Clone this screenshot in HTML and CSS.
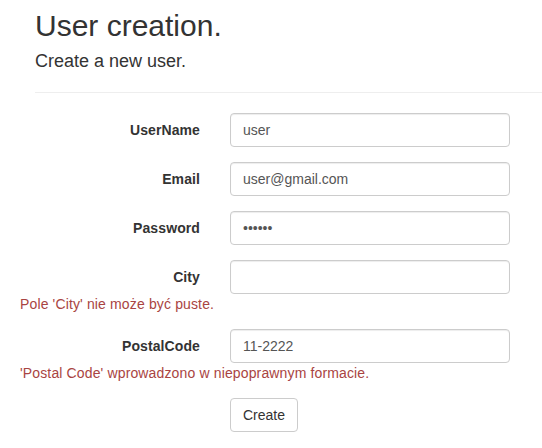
FILE: index.html
```html
<!DOCTYPE html>
<html>
<head>
<meta charset="utf-8">
<link rel="stylesheet" href="styles.css">
</head>
<body>
<div class="page">
  <h2 class="title">User creation.</h2>
  <h4 class="subtitle">Create a new user.</h4>
  <hr class="rule">
  <form class="form">
    <div class="form-group">
      <label class="control-label">UserName</label>
      <div class="field"><input class="form-control" type="text" value="user"></div>
    </div>
    <div class="form-group">
      <label class="control-label">Email</label>
      <div class="field"><input class="form-control" type="text" value="user@gmail.com"></div>
    </div>
    <div class="form-group">
      <label class="control-label">Password</label>
      <div class="field"><input class="form-control" type="password" value="123456"></div>
    </div>
    <div class="form-group">
      <label class="control-label">City</label>
      <div class="field"><input class="form-control" type="text" value=""></div>
      <span class="text-danger">Pole 'City' nie może być puste.</span>
    </div>
    <div class="form-group">
      <label class="control-label">PostalCode</label>
      <div class="field"><input class="form-control" type="text" value="11-2222"></div>
      <span class="text-danger">'Postal Code' wprowadzono w niepoprawnym formacie.</span>
    </div>
    <div class="form-group">
      <div class="spacer"></div>
      <div class="field"><button type="button" class="btn">Create</button></div>
    </div>
  </form>
</div>
</body>
</html>
```

FILE: styles.css
```css
* { box-sizing: border-box; }
html, body { margin: 0; padding: 0; background: #fff; }
body {
  font-family: "Liberation Sans", Arial, Helvetica, sans-serif;
  font-size: 14px;
  line-height: 1.42857143;
  color: #333;
  overflow: hidden;
}
.page {
  padding: 9px 0 0 35px;
}
.title {
  font-size: 30px;
  font-weight: 500;
  line-height: 1.1;
  margin: 0 0 10px 0;
}
.subtitle {
  font-size: 18px;
  font-weight: 500;
  line-height: 1.1;
  margin: 10px 0 0 0;
}
.rule {
  margin: 20px 0;
  border: 0;
  border-top: 1px solid #eee;
  height: 0;
}
.form {
  margin-left: -15px;
}
.form-group {
  display: grid;
  grid-template-columns: 195px 1fr;
  margin-bottom: 15px;
}
.control-label {
  font-weight: bold;
  text-align: right;
  padding: 7px 15px 0 15px;
  letter-spacing: 0.1px;
}
.field {
  padding: 0 15px;
}
.form-control {
  display: block;
  width: 100%;
  max-width: 280px;
  height: 34px;
  padding: 6px 12px;
  font-family: inherit;
  font-size: 14px;
  line-height: 1.42857143;
  color: #555;
  background: #fff;
  border: 1px solid #ccc;
  border-radius: 4px;
  box-shadow: inset 0 1px 1px rgba(0,0,0,.075);
  margin: 0;
}
.text-danger {
  grid-column: 1 / -1;
  color: #a94442;
  display: block;
  letter-spacing: 0.14px;
}
.btn {
  display: inline-block;
  height: 34px;
  padding: 6px 12px;
  font-family: inherit;
  font-size: 14px;
  line-height: 1.42857143;
  color: #333;
  background: #fff;
  border: 1px solid #ccc;
  border-radius: 4px;
  margin: 0;
}
```
